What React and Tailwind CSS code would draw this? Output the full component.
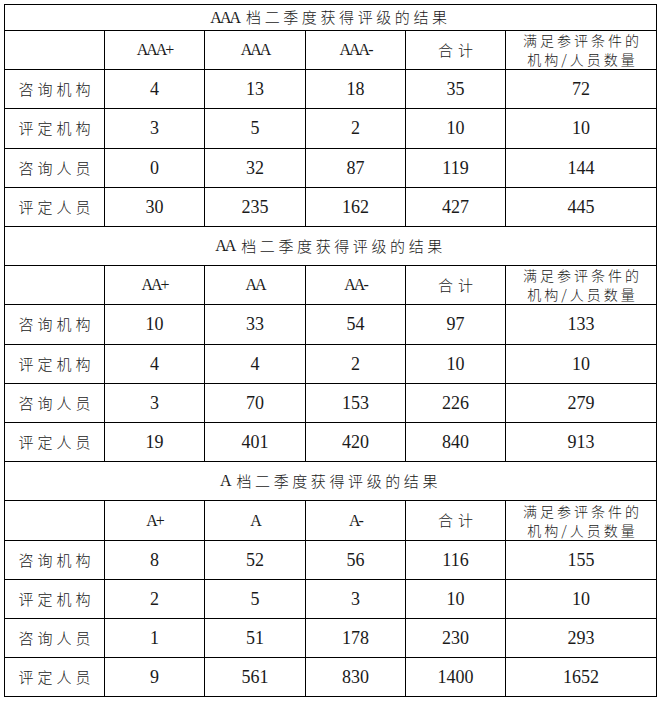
import React from 'react';

const sections = [
  {
    title: 'AAA 档二季度获得评级的结果',
    grades: ['AAA+', 'AAA', 'AAA-'],
    titleH: 'h-[26px]',
    heights: ['h-[39px]', 'h-[39px]', 'h-[40px]', 'h-[39px]', 'h-[39px]'],
    rows: [
      ['咨询机构', 4, 13, 18, 35, 72],
      ['评定机构', 3, 5, 2, 10, 10],
      ['咨询人员', 0, 32, 87, 119, 144],
      ['评定人员', 30, 235, 162, 427, 445],
    ],
  },
  {
    title: 'AA 档二季度获得评级的结果',
    grades: ['AA+', 'AA', 'AA-'],
    titleH: 'h-[39px]',
    heights: ['h-[39px]', 'h-[40px]', 'h-[39px]', 'h-[39px]', 'h-[39px]'],
    rows: [
      ['咨询机构', 10, 33, 54, 97, 133],
      ['评定机构', 4, 4, 2, 10, 10],
      ['咨询人员', 3, 70, 153, 226, 279],
      ['评定人员', 19, 401, 420, 840, 913],
    ],
  },
  {
    title: 'A 档二季度获得评级的结果',
    grades: ['A+', 'A', 'A-'],
    titleH: 'h-[39px]',
    heights: ['h-[40px]', 'h-[39px]', 'h-[39px]', 'h-[39px]', 'h-[39px]'],
    rows: [
      ['咨询机构', 8, 52, 56, 116, 155],
      ['评定机构', 2, 5, 3, 10, 10],
      ['咨询人员', 1, 51, 178, 230, 293],
      ['评定人员', 9, 561, 830, 1400, 1652],
    ],
  },
];

const cjk = "font-['Noto_Sans_CJK_SC',sans-serif] font-light";
const serif = "font-['Liberation_Serif','Noto_Sans_CJK_SC',serif]";

function Cell({ h, className = '', children }) {
  return (
    <div className={`${h} border-r border-b border-black flex items-center justify-center text-[#1a1a1a] ${className}`}>
      {children}
    </div>
  );
}

function Section({ s }) {
  const [grade, rest] = s.title.split(' ');
  return (
    <>
      <Cell h={s.titleH} className="col-span-6">
        <span className={`${serif} text-[16px] tracking-[-2px] mr-[7px]`}>{grade}</span>
        <span className={`${cjk} text-[15px] tracking-[3.6px]`}>{rest}</span>
      </Cell>

      {/* header row */}
      <Cell h={s.heights[0]} />
      {s.grades.map((g) => (
        <Cell key={g} h={s.heights[0]}>
          <span className={`${serif} text-[16px] tracking-[-2px]`}>{g}</span>
        </Cell>
      ))}
      <Cell h={s.heights[0]}>
        <span className={`${cjk} text-[15px] tracking-[5px] pl-[5px]`}>合计</span>
      </Cell>
      <Cell h={s.heights[0]} className="flex-col overflow-hidden">
        <div className={`${cjk} text-[14px] leading-[19px] tracking-[3px] pl-[3px]`}>满足参评条件的</div>
        <div className={`${cjk} text-[14px] leading-[19px] tracking-[3px] pl-[3px]`}>机构/人员数量</div>
      </Cell>

      {s.rows.map((r, i) => (
        <React.Fragment key={r[0]}>
          <Cell h={s.heights[i + 1]}>
            <span className={`${cjk} text-[15px] tracking-[4px] pl-[4px]`}>{r[0]}</span>
          </Cell>
          {r.slice(1).map((v, j) => (
            <Cell key={j} h={s.heights[i + 1]}>
              <span className={`${serif} text-[18px]`}>{v}</span>
            </Cell>
          ))}
        </React.Fragment>
      ))}
    </>
  );
}

export default function App() {
  return (
    <div className="w-[663px] h-[703px] bg-white pt-[4px] pl-[4px]">
      <div className="w-[653px] grid grid-cols-[100px_100px_101px_100px_100px_151px] border-l border-t border-black">
        {sections.map((s) => (
          <Section key={s.title} s={s} />
        ))}
      </div>
    </div>
  );
}
